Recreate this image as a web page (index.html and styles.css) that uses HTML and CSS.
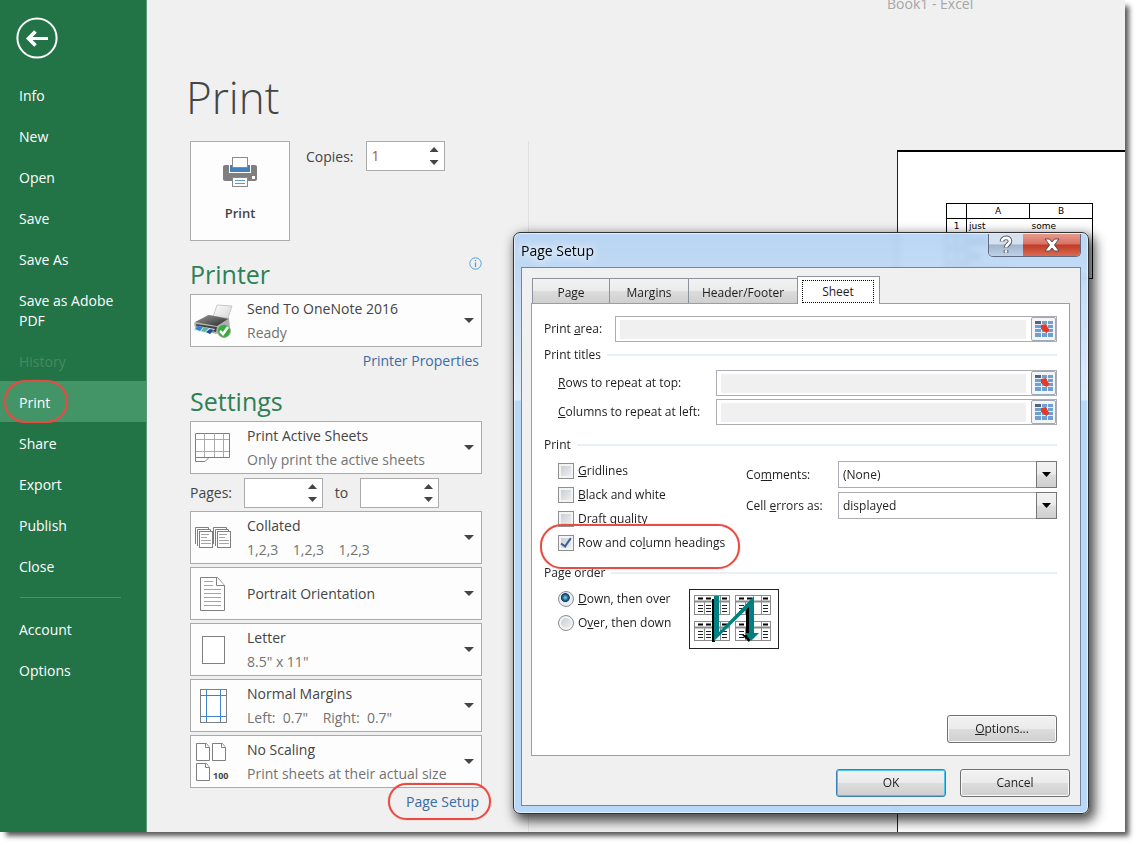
FILE: index.html
```html
<!DOCTYPE html>
<html lang="en">
<head>
    <meta charset="utf-8">
    <title>Book1 - Excel</title>
    <link rel="stylesheet" href="styles.css">
</head>
<body>
<div class="app">
    <nav class="sidebar">
        <button type="button" class="back" aria-label="Back">
            <svg width="42" height="42" viewBox="0 0 42 42" fill="none" stroke="#fff">
                <circle cx="21" cy="21" r="19.6" stroke-width="2"/>
                <path d="M12.5 21.5H32" stroke-width="3"/>
                <path d="M19.5 14.5L12.5 21.5L19.5 28.5" stroke-width="3.6"/>
            </svg>
        </button>
        <a href="#">Info</a>
        <a href="#">New</a>
        <a href="#">Open</a>
        <a href="#">Save</a>
        <a href="#">Save As</a>
        <a href="#">Save as Adobe PDF</a>
        <a href="#" class="disabled">History</a>
        <a href="#" class="current">Print</a>
        <a href="#">Share</a>
        <a href="#">Export</a>
        <a href="#">Publish</a>
        <a href="#">Close</a>
        <hr>
        <a href="#">Account</a>
        <a href="#">Options</a>
    </nav>

    <main class="main">
        <div class="window-title">Book1 - Excel</div>
        <h1>Print</h1>
        <div class="columns">
            <section class="settings">
                <div class="print-row">
                    <button type="button" class="print-button">
                        <svg width="34" height="30" viewBox="0 0 34 30">
                            <rect x="0" y="8" width="34" height="16" rx="2" fill="#7f7f7f"/>
                            <rect x="6" y="7" width="22" height="9" fill="#fff"/>
                            <rect x="7" y="8" width="20" height="7" fill="#4480bb"/>
                            <rect x="9.5" y=".5" width="15" height="10" fill="#fff" stroke="#8a8a8a"/>
                            <rect x="29" y="19" width="3" height="3" fill="#fff"/>
                            <rect x="9.5" y="20.5" width="15" height="9" fill="#fff" stroke="#8a8a8a"/>
                            <path d="M12 23.5H22M12 26.5H22" stroke="#5b9bd5"/>
                        </svg>
                        Print
                    </button>
                    <label for="copies">Copies:</label>
                    <span class="spinner">
                        <input id="copies" type="text" value="1">
                        <span class="spin-buttons"><button type="button" class="up" aria-label="More"></button><button type="button" class="down" aria-label="Fewer"></button></span>
                    </span>
                </div>

                <div class="heading">
                    <h2>Printer</h2>
                    <svg width="13" height="13" viewBox="0 0 13 13" fill="none" stroke="#5b9bd5">
                        <circle cx="6.5" cy="6.5" r="5.7"/>
                        <path d="M6.5 5.5V10M6.5 3V4.3" stroke-width="1.3"/>
                    </svg>
                </div>
                <button type="button" class="choice">
                    <span class="icon">
                        <svg width="42" height="36" viewBox="0 0 42 36">
                            <defs>
                                <linearGradient id="paper" x1="0" y1="0" x2="1" y2="1">
                                    <stop offset="0" stop-color="#fff"/>
                                    <stop offset="1" stop-color="#d0d0d0"/>
                                </linearGradient>
                                <linearGradient id="lid" x1="0" y1="0" x2="1" y2="1">
                                    <stop offset="0" stop-color="#999"/>
                                    <stop offset="1" stop-color="#2a2a2a"/>
                                </linearGradient>
                            </defs>
                            <path d="M25 2L40 3L35 18L21 14Z" fill="url(#paper)" stroke="#aaa" stroke-width=".6"/>
                            <path d="M2 20L16 12L37 15L38 25L24 31L3 25Z" fill="#b0b0b0"/>
                            <path d="M3 19L17 12L36 16L25 23Z" fill="url(#lid)"/>
                            <path d="M4 21L25 24L24 29L5 25Z" fill="#444"/>
                            <path d="M1 27L6 23L23 26L18 31Z" fill="#d7e7f5"/>
                            <path d="M3 26L6 23L11 24L8 28Z" fill="#2d80cb"/>
                            <path d="M9 28L12 24L17 25L13 29Z" fill="#56b8a0"/>
                            <path d="M14 29L18 26L22 27L18 31Z" fill="#224e98"/>
                            <circle cx="32" cy="28" r="6.5" fill="#35ad38" stroke="#a9aaa9"/>
                            <path d="M28 28L31 31L36 24" fill="none" stroke="#fff" stroke-width="2.5"/>
                        </svg>
                    </span>
                    <span class="text">Send To OneNote 2016<small>Ready</small></span>
                </button>
                <div class="link-row"><a href="#">Printer Properties</a></div>

                <div class="heading"><h2>Settings</h2></div>
                <button type="button" class="choice">
                    <span class="icon">
                        <svg width="36" height="30" viewBox="0 0 36 30" fill="#fff" stroke="#7f7f7f">
                            <path d="M.5 24V28.5H10L14 24.5"/>
                            <path d="M.5 .5H34.5V24.5H.5Z"/>
                            <path d="M9.5 .5V24M19.5 .5V24M28.5 .5V24M.5 6.5H34M.5 18.5H34" stroke="#aaa"/>
                        </svg>
                    </span>
                    <span class="text">Print Active Sheets<small>Only print the active sheets</small></span>
                </button>
                <div class="pages">
                    <label for="from">Pages:</label>
                    <span class="spinner">
                        <input id="from" type="text">
                        <span class="spin-buttons"><button type="button" class="up" aria-label="Next"></button><button type="button" class="down" aria-label="Previous"></button></span>
                    </span>
                    <label for="to">to</label>
                    <span class="spinner">
                        <input id="to" type="text">
                        <span class="spin-buttons"><button type="button" class="up" aria-label="Next"></button><button type="button" class="down" aria-label="Previous"></button></span>
                    </span>
                </div>
                <button type="button" class="choice">
                    <span class="icon">
                        <svg width="36" height="22" viewBox="0 0 36 22" fill="#fff" stroke="#7f7f7f">
                            <g id="stack">
                                <path d="M.5 17V.5H13.5V4"/>
                                <path d="M2.5 19V2.5H15.5V6"/>
                                <rect x="4.5" y="4.5" width="13" height="16"/>
                                <path d="M6 7.5H14M6 10.5H12M6 13.5H16M6 16.5H16" stroke="#a5a5a5"/>
                            </g>
                            <use href="#stack" x="18"/>
                        </svg>
                    </span>
                    <span class="text">Collated<small>1,2,3 &nbsp;&nbsp; 1,2,3 &nbsp;&nbsp; 1,2,3</small></span>
                </button>
                <button type="button" class="choice">
                    <span class="icon">
                        <svg width="26" height="34" viewBox="0 0 26 34" fill="#fff" stroke="#7f7f7f">
                            <path d="M.5 .5H17.5L24.5 8.5V33.5H.5Z"/>
                            <path d="M16.5 .5V8.5H24.5"/>
                            <path d="M4 4.5H13M4 8.5H13M4 12.5H21M4 16.5H21M4 20.5H21M4 24.5H21M4 28.5H21" stroke="#a5a5a5"/>
                        </svg>
                    </span>
                    <span class="text">Portrait Orientation</span>
                </button>
                <button type="button" class="choice">
                    <span class="icon">
                        <svg width="23" height="28" viewBox="0 0 23 28">
                            <rect x=".5" y=".5" width="22" height="27" fill="#fff" stroke="#7f7f7f"/>
                        </svg>
                    </span>
                    <span class="text">Letter<small>8.5" x 11"</small></span>
                </button>
                <button type="button" class="choice">
                    <span class="icon">
                        <svg width="27" height="34" viewBox="0 0 27 34">
                            <rect x=".5" y=".5" width="26" height="33" fill="#fff" stroke="#7f7f7f"/>
                            <path d="M6.5 1V33M20.5 1V33M1 6.5H26M1 27.5H26" stroke="#3f86c6"/>
                        </svg>
                    </span>
                    <span class="text">Normal Margins<small>Left:&nbsp; 0.7" &nbsp;&nbsp; Right:&nbsp; 0.7"</small></span>
                </button>
                <button type="button" class="choice">
                    <span class="icon">
                        <svg width="34" height="38" viewBox="0 0 34 38" fill="#fff" stroke="#7f7f7f">
                            <g id="sheet">
                                <path d="M.5 .5H10.5L13.5 4.5V17.5H.5Z"/>
                                <path d="M9.5 .5V4.5H13.5" />
                            </g>
                            <use href="#sheet" x="16"/>
                            <use href="#sheet" y="20"/>
                            <text class="scale" x="17" y="36">100</text>
                        </svg>
                    </span>
                    <span class="text">No Scaling<small>Print sheets at their actual size</small></span>
                </button>
                <div class="link-row"><a href="#" class="page-setup">Page Setup</a></div>
            </section>

            <section class="preview">
                <div class="paper">
                    <table>
                        <tr><th class="corner"></th><th>A</th><th>B</th></tr>
                        <tr><th>1</th><td>just</td><td>some</td></tr>
                        <tr><th>2</th><td><i class="w-medium"></i></td><td></td></tr>
                        <tr><th>3</th><td><i class="w-short"></i></td><td></td></tr>
                        <tr><th>4</th><td><i class="w-long"></i></td><td></td></tr>
                    </table>
                </div>
            </section>
        </div>
    </main>

    <div class="dialog" role="dialog" aria-labelledby="dialog-title">
        <div class="titlebar">
            <span id="dialog-title">Page Setup</span>
            <div class="caption-buttons">
                <button type="button" class="help" aria-label="Help">
                    <svg width="14" height="20" viewBox="0 0 14 20" fill="none">
                        <path d="M3 6.5C3 1.5 11 1.5 11 6.3C11 9 7 9.5 7 12.5M7 15V18" stroke="#555b66" stroke-width="4.6"/>
                        <path d="M3 6.2C3 1.8 11 1.8 11 6.3C11 9 7 9.5 7 12.3M7 15.3V17.7" stroke="#fff" stroke-width="2.6"/>
                    </svg>
                </button>
                <button type="button" class="close" aria-label="Close">
                    <svg width="16" height="14" viewBox="0 0 16 14">
                        <path d="M1 1H5.5L8 4L10.5 1H15L10.5 7L15 13H10.5L8 10L5.5 13H1L5.5 7Z" fill="#fff" stroke="#5b4a50"/>
                    </svg>
                </button>
            </div>
        </div>
        <form class="client">
            <div class="tabs" role="tablist">
                <button type="button" role="tab" class="tab-page">Page</button>
                <button type="button" role="tab" class="tab-margins">Margins</button>
                <button type="button" role="tab" class="tab-header">Header/Footer</button>
                <button type="button" role="tab" class="active" aria-selected="true"><span>Sheet</span></button>
            </div>
            <div class="panel">
                <div class="range-row">
                    <label for="area">Print <u>a</u>rea:</label>
                    <span class="range"><input id="area" type="text"><button type="button" aria-label="Collapse">
                        <svg width="20" height="18" viewBox="0 0 20 18">
                            <g id="picker">
                                <rect x="1" y="1" width="18" height="16" fill="#6ea0d2"/>
                                <rect x="1" y="1" width="7" height="3" fill="#56657a"/>
                                <path d="M1 4.5H19M1 8.5H19M1 12.5H19M7.5 1V17M13.5 1V17" stroke="#e3eefa"/>
                                <path d="M7 5L12 4L14 8L15.5 10L12.5 13L9.5 11L7 9Z" fill="#e2392b"/>
                            </g>
                        </svg></button></span>
                </div>
                <h3>Print titles</h3>
                <div class="range-row indent">
                    <label for="rows"><u>R</u>ows to repeat at top:</label>
                    <span class="range"><input id="rows" type="text"><button type="button" aria-label="Collapse"><svg width="20" height="18"><use href="#picker"/></svg></button></span>
                </div>
                <div class="range-row indent">
                    <label for="cols"><u>C</u>olumns to repeat at left:</label>
                    <span class="range"><input id="cols" type="text"><button type="button" aria-label="Collapse"><svg width="20" height="18"><use href="#picker"/></svg></button></span>
                </div>
                <h3>Print</h3>
                <div class="print-options">
                    <div class="checks">
                        <label><input type="checkbox"><span><u>G</u>ridlines</span></label>
                        <label><input type="checkbox"><span><u>B</u>lack and white</span></label>
                        <label><input type="checkbox"><span><u>D</u>raft quality</span></label>
                        <label class="circled"><input type="checkbox" checked><span>Row and co<u>l</u>umn headings</span></label>
                    </div>
                    <div class="selects">
                        <label for="comments">Co<u>m</u>ments:</label>
                        <span class="combo"><select id="comments"><option>(None)</option></select></span>
                        <label for="errors">Cell <u>e</u>rrors as:</label>
                        <span class="combo"><select id="errors"><option>displayed</option></select></span>
                    </div>
                </div>
                <h3>Page order</h3>
                <div class="order">
                    <div class="checks">
                        <label><input type="radio" name="order" checked><span><u>D</u>own, then over</span></label>
                        <label><input type="radio" name="order"><span>O<u>v</u>er, then down</span></label>
                    </div>
                    <svg width="90" height="60" viewBox="0 0 90 60">
                        <rect x=".5" y=".5" width="89" height="59" fill="#fff" stroke="#222"/>
                        <g id="grid-pair">
                            <g id="grid">
                                <rect x="5.5" y="6.5" width="35" height="19" fill="#fff" stroke="#8c8c8c"/>
                                <path d="M5 12.5H41" stroke="#8c8c8c" stroke-width="2"/>
                                <path d="M15.5 13V26M31.5 6V26M40.5 6V26" stroke="#8c8c8c"/>
                                <path d="M9 9.5H14M17 9.5H22M33 9.5H38" stroke="#000" stroke-width="2"/>
                                <path d="M9 16.5H14M17 16.5H22M33 16.5H38M9 19.5H14M17 19.5H22M33 19.5H38M9 22.5H14M17 22.5H22M33 22.5H38" stroke="#222"/>
                            </g>
                            <use href="#grid" x="41"/>
                        </g>
                        <use href="#grid-pair" y="26"/>
                        <path d="M23 10H26V53H23ZM57 16H60V46H64L60 53L53 46H57Z" fill="#000"/>
                        <path d="M25 7H30V43L65 7V44H70L62 52L56 44H60V18L25 52Z" fill="#008080"/>
                    </svg>
                </div>
                <div class="panel-actions"><button type="button" class="push"><u>O</u>ptions...</button></div>
            </div>
            <div class="actions">
                <button type="button" class="push default">OK</button>
                <button type="button" class="push">Cancel</button>
            </div>
        </form>
    </div>
</div>
</body>
</html>
```
FILE: styles.css
```css
*, *::before, *::after {
    box-sizing: border-box;
}
body {
    margin: 0;
    background: #fff;
    color: #444;
    font: 14px/20px "Open Sans", "Noto Sans", sans-serif;
    overflow: hidden;
}
button, input, select {
    font: inherit;
    color: inherit;
    margin: 0;
    padding: 0;
}
button svg {
    display: block;
}
h1, h2, h3 {
    margin: 0;
    font-weight: normal;
}

/* window */
.app {
    position: relative;
    display: flex;
    min-height: calc(100vh - 15px);
    margin: 0 14px 15px 0;
    background: #f0f0f0;
    box-shadow: 5px 5px 5px -1px rgba(0, 0, 0, .65);
}

/* sidebar */
.sidebar {
    flex: 0 0 147px;
    padding-top: 17px;
    background: #227447;
    border-right: 1px solid #5c9a78;
}
.sidebar a {
    display: block;
    padding: 12px 20px 9px 19px;
    color: #fff;
    text-decoration: none;
}
.sidebar .back {
    display: block;
    margin: 0 0 15px 16px;
    border: 0;
    background: none;
}
.sidebar .disabled {
    color: #46895f;
}
.sidebar .current {
    position: relative;
    background: #439467;
}
.sidebar hr {
    margin: 11px 25px 10px 20px;
    border: 0;
    border-top: 1px solid #439467;
}

/* red marker rings */
.sidebar .current::after,
.page-setup::after,
.circled::after {
    content: "";
    position: absolute;
    border: 2px solid #e94b43;
    border-radius: 22px;
    box-shadow: 0 0 1px #e94b43;
    pointer-events: none;
}
.sidebar .current::after {
    left: 4px;
    top: -1px;
    width: 64px;
    height: 43px;
}

/* print settings */
.main {
    flex: 1;
    display: flex;
    flex-direction: column;
    min-width: 0;
}
.window-title {
    height: 14px;
    margin-left: 740px;
    line-height: 8px;
    color: #a6a6a6;
}
h1 {
    padding-left: 39px;
    margin: 53px 0 14px;
    font-size: 44px;
    line-height: 60px;
    font-weight: 300;
}
.columns {
    flex: 1;
    display: flex;
}
.settings {
    flex: 0 0 382px;
    padding: 0 46px 0 43px;
    border-right: 1px solid #e0e0e0;
}
.print-row {
    display: flex;
    align-items: flex-start;
    line-height: 32px;
}
.print-row label {
    margin: 0 12px 0 16px;
}
.print-button {
    display: flex;
    flex-direction: column;
    align-items: center;
    gap: 16px;
    width: 100px;
    height: 100px;
    padding-top: 15px;
    border: 1px solid #ababab;
    background: #fdfdfd;
    font-weight: 600;
    font-size: 13px;
    line-height: 20px;
}
.spinner {
    display: flex;
    width: 79px;
    height: 30px;
    border: 1px solid #ababab;
    background: #fff;
}
.spinner input {
    flex: 1;
    min-width: 0;
    padding-left: 5px;
    border: 0;
    background: none;
}
#copies {
    color: #a0622c;
}
.spin-buttons {
    display: flex;
    flex-direction: column;
    justify-content: center;
    gap: 8px;
    width: 14px;
}
.spin-buttons button {
    width: 9px;
    height: 5px;
    border: 0;
    background: #444;
}
.spin-buttons .up {
    clip-path: polygon(50% 0, 100% 100%, 0 100%);
}
.spin-buttons .down {
    clip-path: polygon(0 0, 100% 0, 50% 100%);
}
.heading {
    display: flex;
    justify-content: space-between;
    height: 53px;
    padding-top: 16px;
}
.heading h2 {
    font-size: 25px;
    line-height: 34px;
    color: #2e8055;
}
.choice {
    position: relative;
    display: flex;
    align-items: center;
    width: 100%;
    height: 53px;
    margin-bottom: 3px;
    border: 1px solid #ababab;
    background: #fdfdfd;
    text-align: left;
}
.choice::after {
    content: "";
    width: 10px;
    height: 5px;
    margin: 0 7px 0 auto;
    background: #444;
    clip-path: polygon(0 0, 100% 0, 50% 100%);
}
.icon {
    display: flex;
    justify-content: center;
    width: 44px;
    margin-right: 12px;
}
.scale {
    fill: #444;
    stroke: none;
    font-size: 9px;
    font-weight: bold;
}
.text {
    line-height: 24px;
    white-space: nowrap;
}
.text small {
    display: block;
    font-size: 14px;
    color: #737373;
}
.link-row {
    height: 21px;
    margin-top: -3px;
    padding: 4px 3px 0 0;
    text-align: right;
}
.link-row a {
    color: #3a6ba5;
    text-decoration: none;
}
.page-setup {
    position: relative;
}
.page-setup::after {
    left: -18px;
    right: -12px;
    top: -9px;
    height: 37px;
}
.pages {
    display: flex;
    align-items: center;
    margin: 4px 0 3px;
}
.pages label {
    width: 54px;
}
.pages .spinner + label {
    width: 37px;
    text-align: center;
}

/* preview */
.preview {
    flex: 1;
    display: flex;
    padding: 9px 0 0 368px;
}
.paper {
    flex: 1;
    padding: 51px 0 0 48px;
    border-top: 2px solid #000;
    border-left: 1px solid #222;
    background: #fff;
}
.paper table {
    width: 147px;
    table-layout: fixed;
    border-collapse: collapse;
    border: 1px solid #000;
    color: #000;
    font: 9px/14px "DejaVu Sans", sans-serif;
}
.paper th, .paper td {
    height: 14px;
    padding: 0 2px;
    text-align: left;
}
.paper th {
    border: 1px solid #000;
    font-weight: normal;
    text-align: center;
}
.paper .corner {
    width: 20px;
}
.paper i {
    display: block;
    height: 5px;
    background: #888;
}
.w-short { width: 11px; }
.w-medium { width: 18px; }
.w-long { width: 40px; }

/* page setup dialog */
.dialog {
    position: absolute;
    left: 513px;
    top: 232px;
    width: 576px;
    padding: 1px 7px 7px;
    border: 1px solid #333;
    border-radius: 7px;
    background: linear-gradient(rgba(175, 208, 243, .86) 0, rgba(215, 233, 250, .86) 167px, rgba(178, 213, 248, .9) 168px);
    backdrop-filter: blur(3px);
    box-shadow: inset 0 0 0 1px rgba(255, 255, 255, .6), 4px 5px 12px 2px rgba(0, 0, 0, .7);
    color: #1e1e1e;
    font-size: 12px;
    line-height: 18px;
}
.titlebar {
    display: flex;
    justify-content: space-between;
    height: 33px;
    font-size: 14px;
    line-height: 33px;
    color: #000;
    text-shadow: 0 0 8px #fff, 0 0 8px #fff;
}
.caption-buttons {
    display: flex;
    height: 23px;
    border: 1px solid #5d6b80;
    border-top: 0;
    border-radius: 0 0 5px 5px;
    overflow: hidden;
}
.caption-buttons button {
    display: flex;
    align-items: center;
    justify-content: center;
    border: 0;
}
.help {
    width: 34px;
    background: linear-gradient(#d5e1ee 45%, #a0b5cc 50%, #bdd2e8);
}
.close {
    width: 57px;
    background: linear-gradient(#e79a8d 0, #d87465 45%, #c03a25 50%, #d96b51);
}
.client {
    padding: 8px 10px 8px 9px;
    border: 1px solid #76859a;
    background: #f0f0f0;
}
.tabs {
    display: flex;
    align-items: flex-end;
    height: 27px;
    padding-left: 1px;
}
.tabs button {
    height: 25px;
    padding-top: 3px;
    border: 1px solid #8e929c;
    border-bottom: 0;
    border-right: 0;
    background: linear-gradient(#f2f2f2 0, #ebebeb 48%, #dcdcdc 52%, #cfcfcf);
}
.tab-page { width: 77px; }
.tab-margins { width: 79px; }
.tab-header { width: 109px; }
.tabs .active {
    position: relative;
    width: 83px;
    height: 28px;
    margin-bottom: -1px;
    padding: 3px 5px 1px 4px;
    border-right: 1px solid #8e929c;
    background: #fff;
}
.active span {
    display: block;
    border: 1px dotted #000;
    line-height: 21px;
}
.panel {
    padding: 12px;
    border: 1px solid #9a9da8;
    background: #fff;
}
.panel h3 {
    display: flex;
    align-items: center;
    gap: 6px;
    font-size: 12px;
    line-height: 18px;
}
.panel h3::after {
    content: "";
    flex: 1;
    height: 2px;
    background: #e9eff4;
}
.range-row {
    display: flex;
    align-items: center;
    margin-bottom: 4px;
}
.range-row label {
    width: 71px;
}
.range-row.indent {
    margin: 3px 0 0 14px;
}
h3 + .range-row.indent {
    margin-top: 6px;
}
.range-row.indent label {
    width: 158px;
}
.range {
    flex: 1;
    display: flex;
    height: 26px;
    border: 1px solid #abadb3;
}
.range input {
    flex: 1;
    min-width: 0;
    border: solid #fff;
    border-width: 3px 5px 2px 4px;
    background: #f0f0f0;
}
.range button {
    display: flex;
    align-items: center;
    justify-content: center;
    width: 25px;
    border: 1px solid #9fa8b5;
    border-radius: 2px;
    background: #f3f5f8;
}
.range-row.indent + h3 {
    margin-top: 11px;
}
.print-options {
    display: flex;
    justify-content: space-between;
    padding: 7px 0 11px 14px;
}
.checks {
    display: flex;
    flex-direction: column;
    gap: 4px;
}
.checks label {
    display: flex;
    align-items: center;
    gap: 4px;
    height: 20px;
}
.checks input {
    appearance: none;
    width: 16px;
    height: 16px;
    border: 1px solid #8e8f8f;
    box-shadow: inset 0 0 0 2px #f4f4f4;
    background: linear-gradient(135deg, #c3c8cf, #f4f4f4);
}
.checks input[type=checkbox]:checked {
    position: relative;
}
.checks input[type=checkbox]:checked::after {
    content: "";
    position: absolute;
    left: 4px;
    top: 0;
    width: 6px;
    height: 11px;
    border: solid #3b5f9b;
    border-width: 0 2px 2px 0;
    transform: rotate(35deg);
}
.checks input[type=radio] {
    border-radius: 50%;
}
.checks input[type=radio]:checked {
    background: radial-gradient(circle at 45% 40%, #8ed0ea 0, #1f6390 25%, #123a5c 36%, #e8edf1 42%);
    box-shadow: none;
}
.circled {
    position: relative;
}
.circled::after {
    left: -18px;
    right: -15px;
    top: -9px;
    height: 45px;
}
.selects {
    display: grid;
    grid-template-columns: 92px 219px;
    grid-auto-rows: 27px;
    align-items: center;
    align-content: start;
    row-gap: 4px;
}
.combo {
    position: relative;
    height: 27px;
}
.combo select {
    appearance: none;
    width: 100%;
    height: 27px;
    padding-left: 4px;
    border: 1px solid #abadb3;
    border-radius: 0;
    background: #fff;
}
.combo::before {
    content: "";
    position: absolute;
    right: 0;
    top: 0;
    width: 21px;
    height: 27px;
    border: 1px solid #777;
    background: linear-gradient(#f2f2f2 0, #ebebeb 48%, #dcdcdc 52%, #cfcfcf);
    pointer-events: none;
}
.combo::after {
    content: "";
    position: absolute;
    right: 6px;
    top: 11px;
    width: 9px;
    height: 5px;
    background: #000;
    clip-path: polygon(0 0, 100% 0, 50% 100%);
    pointer-events: none;
}
.order {
    display: flex;
    gap: 18px;
    padding: 7px 0 0 14px;
}
.panel-actions {
    display: flex;
    justify-content: flex-end;
    margin-top: 66px;
}
.push {
    width: 110px;
    height: 28px;
    border: 1px solid #707070;
    border-radius: 3px;
    background: linear-gradient(#f2f2f2 0, #ebebeb 48%, #dcdcdc 52%, #cfcfcf);
    box-shadow: inset 0 0 0 1px #fafafa;
}
.push.default {
    border-color: #3c7fb1;
    box-shadow: inset 0 0 0 1px #4cc4f0;
}
.actions {
    display: flex;
    justify-content: flex-end;
    gap: 14px;
    padding-top: 13px;
}
```
